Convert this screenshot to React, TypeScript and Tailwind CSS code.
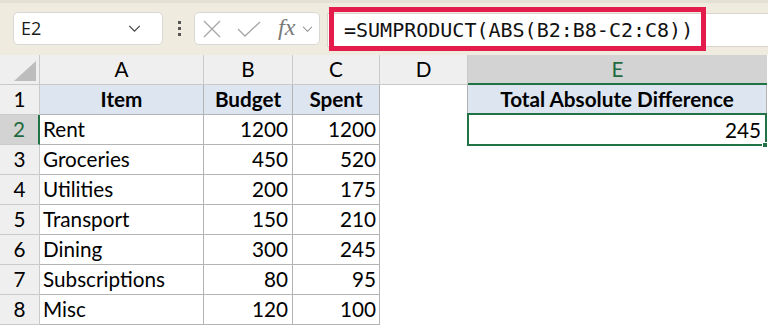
import React from "react";

const rows = [
  ["Rent", 1200, 1200],
  ["Groceries", 450, 520],
  ["Utilities", 200, 175],
  ["Transport", 150, 210],
  ["Dining", 300, 245],
  ["Subscriptions", 80, 95],
  ["Misc", 120, 100],
] as const;

const GRID = "grid grid-cols-[40px_164px_89px_87px_88px_299px]";
const CELL = "h-[30px] flex items-center leading-none";
const LINE = "border-r border-b border-[#b4b4b4]";
const HDR = "bg-[#efefef] border-r border-b border-[#cacaca]";

function Chevron({ className }: { className?: string }) {
  return (
    <svg viewBox="0 0 14 8" className={className} fill="none" stroke="currentColor" strokeWidth="1.4">
      <path d="M1 1l6 6 6-6" />
    </svg>
  );
}

function Toolbar() {
  return (
    <div className="h-[55px] bg-[#efecdf] border-t-[3px] border-[#e4e1d4] flex items-start pt-[9px] font-['Open_Sans',sans-serif]">
      <div className="ml-[13px] w-[150px] h-[33px] bg-white rounded-[5px] border border-[#d9d8d2] flex items-center pl-[7px] pr-[21px] justify-between">
        <span className="text-[18px] text-[#1b1b1b]">E2</span>
        <Chevron className="w-[13px] h-[7px] text-[#444]" />
      </div>
      <div className="ml-[14px] w-[4px] h-[33px] flex flex-col items-center justify-center gap-[3px]">
        <span className="w-[3px] h-[3px] bg-[#555]" />
        <span className="w-[3px] h-[3px] bg-[#555]" />
        <span className="w-[3px] h-[3px] bg-[#555]" />
      </div>
      <div className="ml-[13px] w-[126px] h-[33px] bg-white rounded-[5px] border border-[#d9d8d2] flex items-center pl-[8px]">
        <svg viewBox="0 0 18 18" className="w-[18px] h-[18px] text-[#a6a6a6]" fill="none" stroke="currentColor" strokeWidth="1.3">
          <path d="M1 1l16 16M17 1L1 17" />
        </svg>
        <svg viewBox="0 0 24 16" className="ml-[16px] w-[24px] h-[16px] text-[#a6a6a6]" fill="none" stroke="currentColor" strokeWidth="1.3">
          <path d="M1 8l7 7L23 1" />
        </svg>
        <span className="ml-[17px] font-['Liberation_Serif',serif] italic text-[24px] leading-none text-[#7a7a7a] -mt-[3px]">fx</span>
        <Chevron className="ml-[7px] w-[11px] h-[6px] text-[#8a8a8a]" />
      </div>
      <div className="relative ml-[7px] flex-1 h-[34px] mt-[1px] bg-white border-y border-l border-[#d6d4cb] flex items-center pl-[16px]">
        <span className="font-['DejaVu_Sans_Mono',monospace] text-[20px] leading-none text-[#111]">
          =SUMPRODUCT(ABS(B2:B8-C2:C8))
        </span>
        <div className="absolute left-[1px] -top-[7px] w-[377px] h-[44px] border-[5px] border-[#e31c4b]" />
      </div>
    </div>
  );
}

export default function App() {
  return (
    <div className="w-[768px] h-[326px] bg-white overflow-hidden text-black">
      <Toolbar />
      <div className={`${GRID} font-['Lato',sans-serif] text-[20.7px]`}>
        {/* column headers */}
        <div className={`${CELL} ${HDR} relative`}>
          <svg viewBox="0 0 22 20" className="absolute right-[3px] bottom-[3px] w-[22px] h-[20px]">
            <path d="M22 0V20H0Z" fill="#bdbdbd" />
          </svg>
        </div>
        {["A", "B", "C", "D"].map((c) => (
          <div key={c} className={`${CELL} ${HDR} justify-center`}>
            {c}
          </div>
        ))}
        <div className={`${CELL} bg-[#d3d3d3] border-b-2 border-[#217346] justify-center text-[#1e6b3f]`}>E</div>

        {/* row 1 */}
        <div className={`${CELL} ${HDR} justify-center`}>1</div>
        <div className={`${CELL} ${LINE} bg-[#dde6f0] justify-center font-bold`}>Item</div>
        <div className={`${CELL} ${LINE} bg-[#dde6f0] justify-center font-bold`}>Budget</div>
        <div className={`${CELL} ${LINE} bg-[#dde6f0] justify-center font-bold`}>Spent</div>
        <div className={`${CELL} border-r border-[#b4b4b4]`} />
        <div className={`${CELL} ${LINE} bg-[#dde6f0] justify-center font-bold`}>Total Absolute Difference</div>

        {rows.map(([item, budget, spent], i) => (
          <React.Fragment key={item}>
            {i === 0 ? (
              <div className={`${CELL} bg-[#d3d3d3] border-b border-[#cacaca] border-r-2 border-r-[#217346] justify-center text-[#1e6b3f]`}>2</div>
            ) : (
              <div className={`${CELL} ${HDR} justify-center`}>{i + 2}</div>
            )}
            <div className={`${CELL} ${LINE} pl-[3px]`}>{item}</div>
            <div className={`${CELL} ${LINE} justify-end pr-[4px]`}>{budget}</div>
            <div className={`${CELL} ${LINE} justify-end pr-[3px]`}>{spent}</div>
            <div className={CELL} />
            {i === 0 ? (
              <div className={`${CELL} relative justify-end pr-[6px]`}>
                245
                <div className="absolute -left-[1px] -top-[2px] w-[300px] h-[33px] border-[2px] border-[#217346]" />
                <div className="absolute -right-[1px] bottom-[-3px] w-[6px] h-[6px] bg-[#217346] border border-white" />
              </div>
            ) : (
              <div className={CELL} />
            )}
          </React.Fragment>
        ))}
      </div>
    </div>
  );
}
